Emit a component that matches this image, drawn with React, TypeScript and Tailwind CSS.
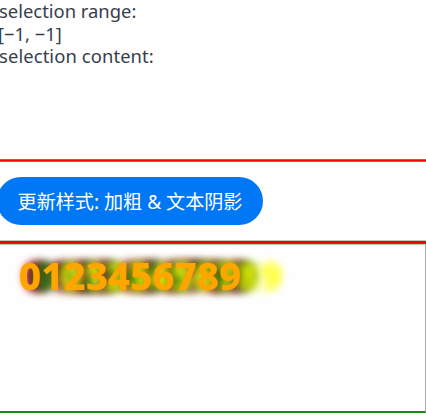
export default function App() {
  return (
    <div className="flex h-[420px] w-[426px] flex-col overflow-hidden bg-[#fefefe]">
      <div className="h-[159px] shrink-0 pt-[0.4px] font-['Noto_Sans',sans-serif] text-[18.4px] leading-[22.4px] text-[#36404a]">
        <div className="-ml-px whitespace-nowrap">selection range:</div>
        <div className="-ml-[2px] whitespace-nowrap">[−1, −1]</div>
        <div className="-ml-px whitespace-nowrap tracking-[0.1px]">selection content:</div>
      </div>
      <div className="h-[3px] shrink-0 border-y border-[#fd3d3d] bg-[#ff0000]" />
      <div className="flex h-[78px] shrink-0 items-start pt-[15px]">
        <button className="-ml-[3px] flex h-12 w-[266px] items-center justify-center rounded-full bg-[#0077f5] pt-[3px] font-['Noto_Sans','Noto_Sans_CJK_SC',sans-serif] text-[19.1px] whitespace-nowrap text-white">
          更新样式: 加粗 &amp; 文本阴影
        </button>
      </div>
      <div className="h-px shrink-0 bg-[#bcc8c2]" />
      <div className="h-[2px] shrink-0 bg-[#f80202]" />
      <div className="h-px shrink-0 bg-[#267a10]" />
      <div className="h-[169px] shrink-0 border-t border-r border-b-2 border-t-[#a5dba5] border-r-[#a9a9a9] border-b-[#138a13] pt-[5px] pl-[19px]">
        <span className="block font-['Noto_Sans',sans-serif] text-[38px] leading-[50px] font-extrabold tracking-[0.25px] text-[#ffa500] [text-shadow:41px_0_9px_#ffff00,16px_0_10px_#008000,12px_0_10px_#a52a2a,8px_0_10px_#000000,4px_0_10px_#ff0000]">
          0123456789
        </span>
      </div>
    </div>
  );
}
